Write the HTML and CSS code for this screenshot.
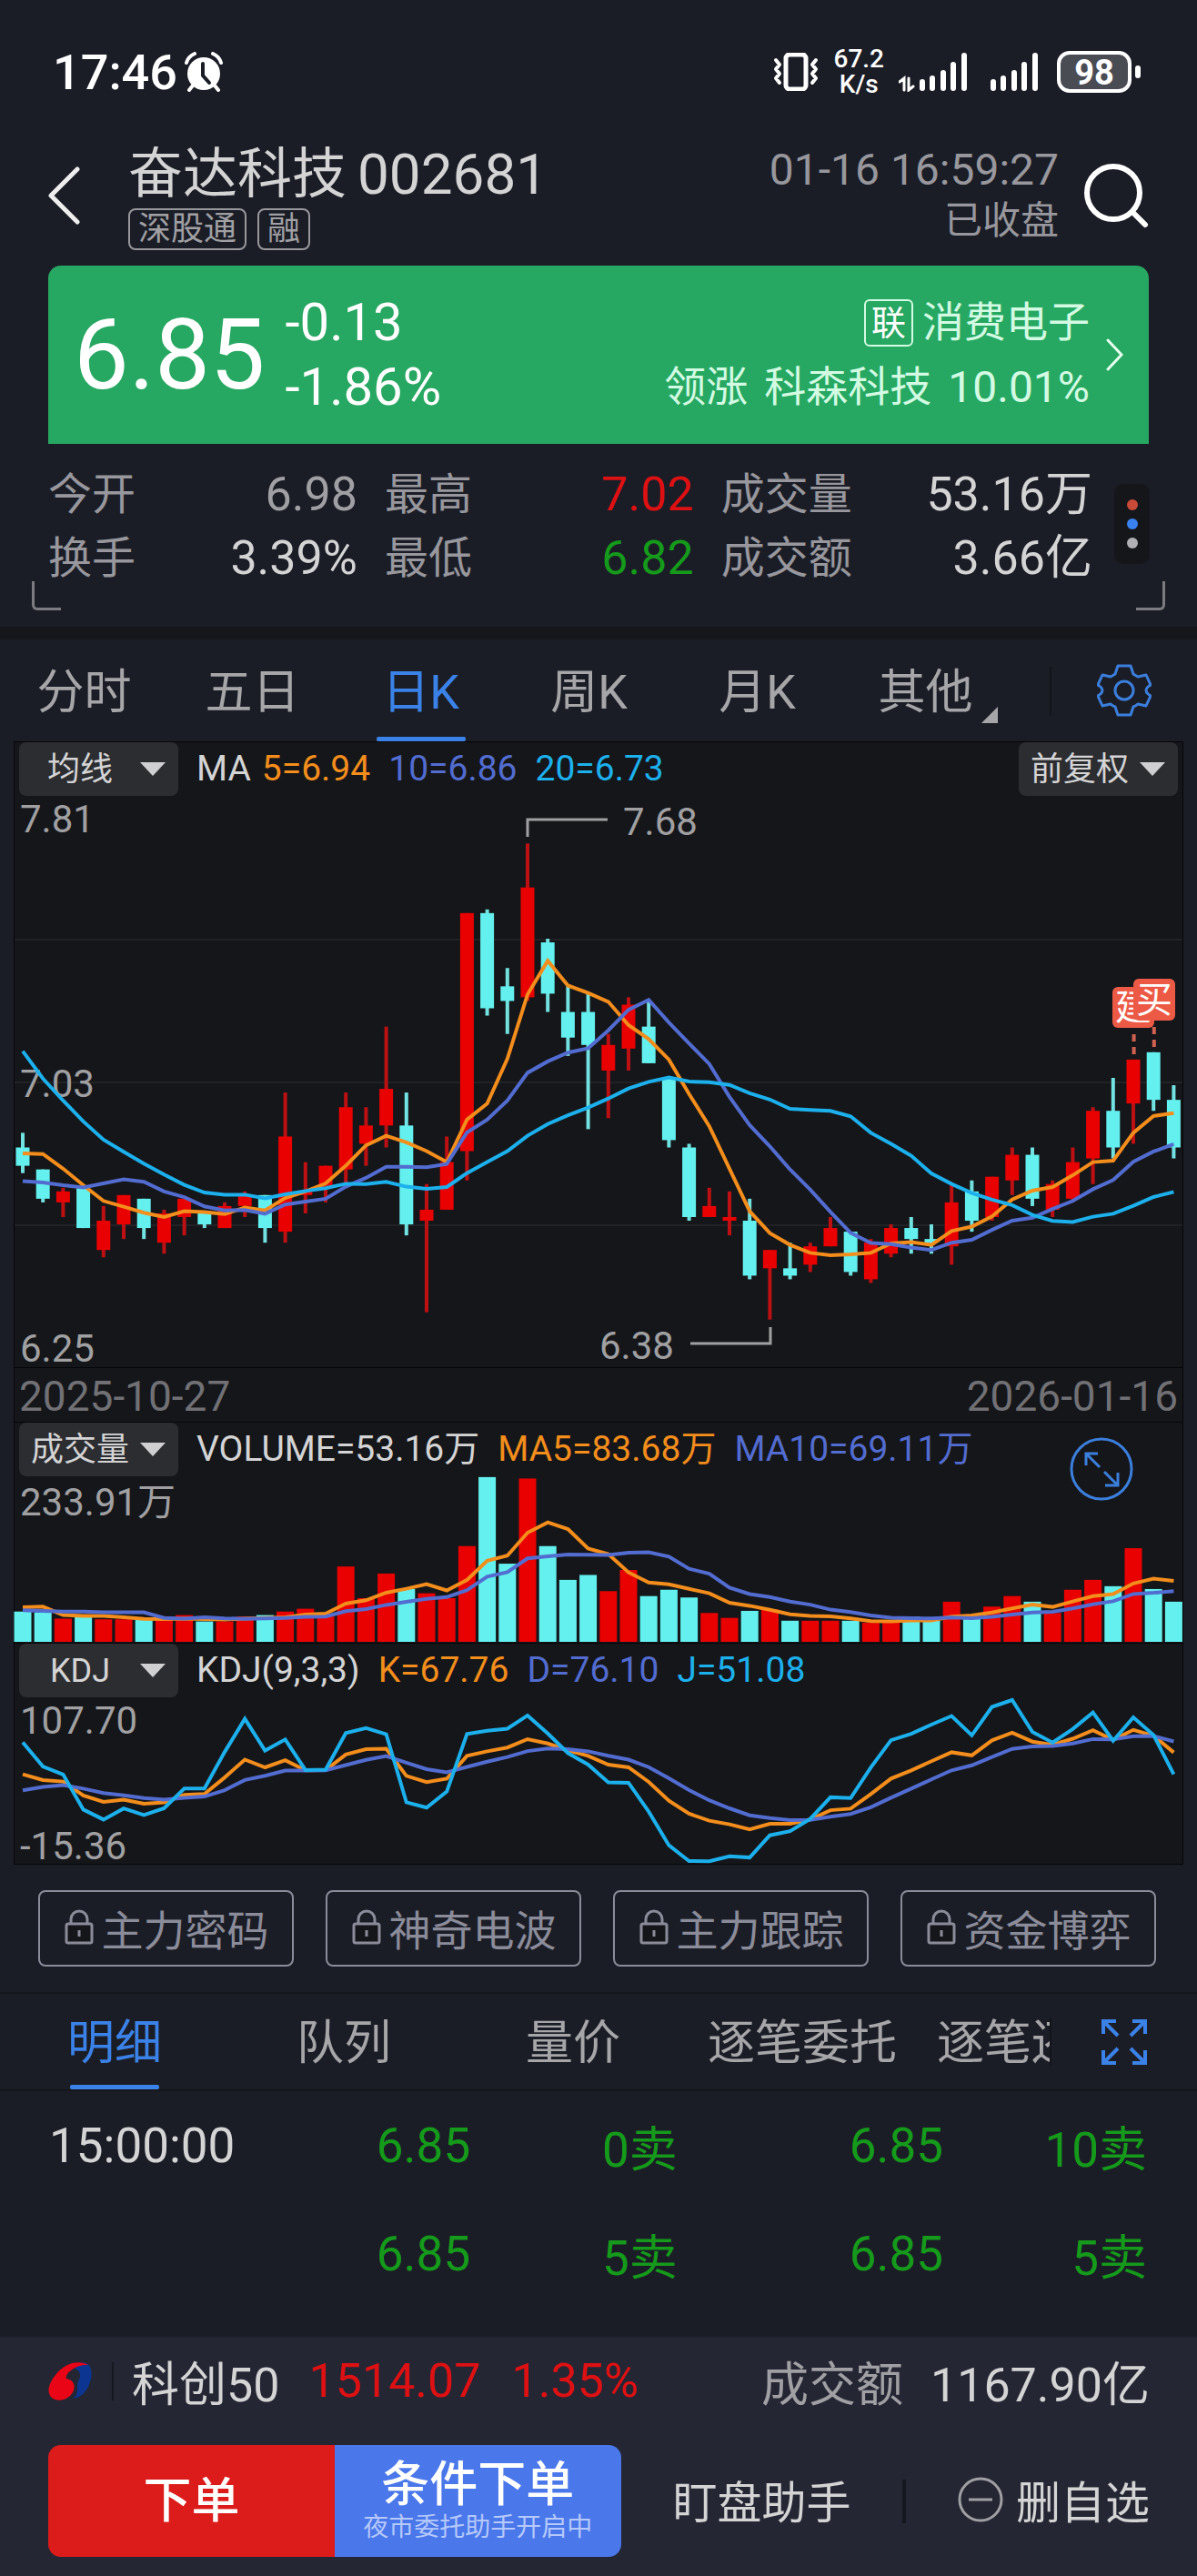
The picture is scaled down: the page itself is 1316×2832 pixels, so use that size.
FILE: index.html
```
<!DOCTYPE html>
<html lang="zh-CN">
<head>
    <meta charset="UTF-8">
    <meta name="viewport" content="width=device-width, initial-scale=1.0">
    <title>奋达科技 002681</title>
    <link rel="stylesheet" href="styles.css">
</head>
<body>
    <div class="status-bar">
        <span class="clock">17:46</span>
        <svg class="alarm" width="42" height="44" viewBox="0 0 42 44">
            <circle cx="21" cy="24" r="18" fill="#fff"/>
            <path d="M2 12Q4 5 11 2M40 12Q38 5 31 2M9 37l-4 5M33 37l4 5" stroke="#fff" stroke-width="4" fill="none" stroke-linecap="round"/>
            <path d="M20 13v13l7 8" stroke="#1b1d26" stroke-width="4" fill="none" stroke-linecap="round"/>
        </svg>
        <div class="status-right">
            <svg width="50" height="42" viewBox="0 0 50 42" fill="none" stroke="#fff" stroke-width="4" stroke-linecap="round" stroke-linejoin="round">
                <rect x="14" y="2" width="22" height="38" rx="4" stroke-width="5"/>
                <path d="M3 8l4 5-4 5 4 5-4 5 4 5M47 8l-4 5 4 5-4 5 4 5-4 5"/>
            </svg>
            <span class="speed">67.2<br>K/s</span>
            <svg width="76" height="44" viewBox="0 0 76 44" stroke="#fff" stroke-width="6" stroke-linecap="round">
                <path d="M26 33v7M37 29v11M49 23v17M60 14v26M72 4v36"/>
                <path d="M1 33l5-4v13M11 29v13l5-4M16 38v0" stroke-width="3" fill="none"/>
            </svg>
            <svg class="signal" width="54" height="44" viewBox="0 0 54 44" stroke="#fff" stroke-width="6" stroke-linecap="round">
                <path d="M4 33v7M15 29v11M27 23v17M38 14v26M50 4v36"/>
            </svg>
            <span class="battery">98</span>
        </div>
    </div>

    <header class="header">
        <button class="icon-btn back" aria-label="返回">
            <svg width="36" height="64" viewBox="0 0 36 64" fill="none" stroke="#eee" stroke-width="5" stroke-linecap="round" stroke-linejoin="round"><path d="M33 3L4 32l29 29"/></svg>
        </button>
        <div class="stock">
            <h1>奋达科技 <span>002681</span></h1>
            <div class="tags"><span>深股通</span><span>融</span></div>
        </div>
        <div class="trade-time">
            <div class="date">01-16 16:59:27</div>
            <div class="state">已收盘</div>
        </div>
        <button class="icon-btn" aria-label="搜索">
            <svg width="74" height="72" viewBox="0 0 74 72" fill="none" stroke="#fff" stroke-width="6" stroke-linecap="round"><circle cx="34" cy="33" r="29"/><path d="M55 54l14 14"/></svg>
        </button>
    </header>

    <section class="quote">
        <a class="quote-card" href="#">
            <strong class="price">6.85</strong>
            <span class="change">-0.13<br>-1.86%</span>
            <span class="sector">
                <span class="sector-name"><i>联</i>消费电子</span>
                <span class="leader"><span>领涨</span> <span>科森科技</span> <b>10.01%</b></span>
            </span>
            <svg width="19" height="36" viewBox="0 0 19 36" fill="none" stroke="#e6fff0" stroke-width="3" stroke-linecap="round"><path d="M2 2l15 16L2 34"/></svg>
        </a>
        <div class="stats">
            <dl>
                <div><dt>今开</dt><dd class="grey">6.98</dd></div>
                <div><dt>换手</dt><dd>3.39%</dd></div>
            </dl>
            <dl>
                <div><dt>最高</dt><dd class="red">7.02</dd></div>
                <div><dt>最低</dt><dd class="green">6.82</dd></div>
            </dl>
            <dl class="wide">
                <div><dt>成交量</dt><dd>53.16万</dd></div>
                <div><dt>成交额</dt><dd>3.66亿</dd></div>
            </dl>
            <button class="more" aria-label="更多"><i></i><i></i><i></i></button>
        </div>
        <div class="corners"><span></span><span></span></div>
    </section>

    <nav class="period">
        <div class="period-tabs">
            <button>分时</button>
            <button>五日</button>
            <button class="active">日K</button>
            <button>周K</button>
            <button>月K</button>
            <button class="other">其他<svg width="18" height="18" viewBox="0 0 18 18"><path d="M18 0v18H0z" fill="#a6a6a9"/></svg></button>
        </div>
        <button class="settings" aria-label="设置">
            <svg width="60" height="60" viewBox="0 0 60 60" fill="none" stroke="#3b7fdd" stroke-width="3" stroke-linejoin="round">
                <path d="M23 3h14l3 9q3 2 5 3l9-2 5 11q-5 3-5 6t5 6l-5 11-9-2q-2 2-5 3l-3 9H23l-3-9q-3-1-5-3l-9 2L1 36q5-3 5-6t-5-6L6 13l9 2q2-1 5-3z"/>
                <circle cx="30" cy="30" r="10"/>
            </svg>
        </button>
    </nav>

    <main class="panel">
        <div class="legend">
            <label class="picker"><select aria-label="主图指标"><option>均线</option></select></label>
            <span>MA</span>
            <span class="orange">5=6.94</span>
            <span class="violet">10=6.86</span>
            <span class="blue">20=6.73</span>
            <label class="picker right"><select aria-label="复权"><option>前复权</option></select></label>
        </div>
        <svg class="chart" id="priceChart" viewBox="0 0 1284 628"></svg>
        <div class="dates"><span>2025-10-27</span><span>2026-01-16</span></div>
        <div class="legend">
            <label class="picker"><select aria-label="副图指标一"><option>成交量</option></select></label>
            <span>VOLUME=53.16万</span>
            <span class="orange gap">MA5=83.68万</span>
            <span class="violet">MA10=69.11万</span>
            <button class="zoom" aria-label="全屏">
                <svg width="70" height="70" viewBox="0 0 70 70" fill="none" stroke="#3b7fdd" stroke-width="3">
                    <circle cx="35" cy="35" r="33"/>
                    <path d="M33 33L18 18M18 31V18h13M38 38l15 15M53 39v14H39"/>
                </svg>
            </button>
        </div>
        <svg class="chart" id="volumeChart" viewBox="0 0 1284 183"></svg>
        <div class="legend">
            <label class="picker"><select aria-label="副图指标二"><option>KDJ</option></select></label>
            <span>KDJ(9,3,3)</span>
            <span class="orange gap">K=67.76</span>
            <span class="violet">D=76.10</span>
            <span class="blue">J=51.08</span>
        </div>
        <svg class="chart" id="kdjChart" viewBox="0 0 1284 183"></svg>
    </main>

    <svg hidden>
        <symbol id="lock" viewBox="0 0 34 40">
            <path d="M8 16v-5a9 9 0 0 1 18 0v5" fill="none" stroke="#8b8c9a" stroke-width="3"/>
            <rect x="3" y="16" width="28" height="21" rx="2" fill="#15161a" stroke="#8b8c9a" stroke-width="3"/>
            <path d="M17 23v7" stroke="#8b8c9a" stroke-width="3"/>
        </symbol>
    </svg>
    <div class="features">
        <button><svg width="34" height="40"><use href="#lock"/></svg>主力密码</button>
        <button><svg width="34" height="40"><use href="#lock"/></svg>神奇电波</button>
        <button><svg width="34" height="40"><use href="#lock"/></svg>主力跟踪</button>
        <button><svg width="34" height="40"><use href="#lock"/></svg>资金博弈</button>
    </div>

    <nav class="detail">
        <div class="detail-tabs">
            <button class="active">明细</button>
            <button>队列</button>
            <button>量价</button>
            <button>逐笔委托</button>
            <button>逐笔还原</button>
        </div>
        <button class="settings" aria-label="展开">
            <svg width="50" height="50" viewBox="0 0 50 50" fill="none" stroke="#3b82e8" stroke-width="4">
                <path d="M2 16V2h14M2 2l16 16M34 2h14v14M48 2L32 18M2 34v14h14M2 48l16-16M34 48h14V34M48 48L32 32"/>
            </svg>
        </button>
    </nav>
    <table class="ticks">
        <tr><th scope="row">15:00:00</th><td>6.85</td><td>0卖</td><td>6.85</td><td>10卖</td></tr>
        <tr><th scope="row"></th><td>6.85</td><td>5卖</td><td>6.85</td><td>5卖</td></tr>
    </table>

    <footer class="footer">
        <div class="index-row">
            <svg width="50" height="46" viewBox="0 0 50 46">
                <path d="M42 3c6 3 7 12 4 21-3 10-10 17-19 18 6-5 5-9 5-14 0-6 4-8 3-13-1-4-5-6-8-8 5-4 10-6 15-4z" fill="#0b3590"/>
                <path d="M44 5C33-1 18 3 8 16 0 26-2 36 4 41c6 5 18 3 23-6 4-8 0-14-7-15-2-6 11-16 24-15z" fill="#ea0516"/>
            </svg>
            <span class="sep"></span>
            <span class="index-name">科创50</span>
            <span class="red">1514.07</span>
            <span class="red">1.35%</span>
            <span class="turnover"><span class="grey">成交额</span>1167.90亿</span>
        </div>
        <div class="actions">
            <div class="order">
                <button class="buy">下单</button>
                <button class="cond">条件下单<small>夜市委托助手开启中</small></button>
            </div>
            <button class="action watch">盯盘助手</button>
            <span class="sep"></span>
            <button class="action">
                <svg width="50" height="50" viewBox="0 0 50 50" fill="none" stroke="#a0a0a4" stroke-width="3"><circle cx="25" cy="25" r="23"/><path d="M12 25h26"/></svg>删自选
            </button>
        </div>
    </footer>

    <script>
        // up/down flag, open-close body top, body bottom, high, low
        const candles = [
            [0,6.85,6.80,6.89,6.78],[0,6.79,6.71,6.79,6.70],[1,6.73,6.70,6.74,6.66],[0,6.74,6.63,6.74,6.63],
            [1,6.65,6.57,6.69,6.55],[1,6.72,6.64,6.72,6.60],[0,6.71,6.63,6.71,6.60],[1,6.67,6.59,6.68,6.56],
            [1,6.71,6.66,6.71,6.61],[0,6.67,6.64,6.67,6.63],[1,6.69,6.63,6.70,6.63],[1,6.72,6.69,6.73,6.66],
            [0,6.72,6.63,6.72,6.59],[1,6.88,6.62,7.00,6.59],[1,6.73,6.72,6.81,6.67],[1,6.80,6.74,6.80,6.70],
            [1,6.96,6.79,7.00,6.74],[1,6.91,6.86,6.96,6.80],[1,7.01,6.91,7.18,6.85],[0,6.91,6.64,7.00,6.61],
            [1,6.68,6.65,6.75,6.40],[1,6.81,6.68,6.88,6.68],[1,7.49,6.84,7.49,6.76],[0,7.49,7.23,7.50,7.21],
            [0,7.29,7.25,7.34,7.16],[1,7.56,7.26,7.68,7.25],[0,7.41,7.27,7.42,7.22],[0,7.22,7.15,7.29,7.10],
            [0,7.22,7.13,7.27,6.90],[1,7.13,7.06,7.16,6.93],[1,7.24,7.12,7.26,7.06],[0,7.18,7.08,7.25,7.08],
            [0,7.04,6.87,7.04,6.85],[0,6.85,6.66,6.86,6.65],[1,6.69,6.66,6.74,6.66],[1,6.66,6.65,6.73,6.61],
            [0,6.65,6.50,6.71,6.49],[1,6.57,6.52,6.57,6.38],[0,6.52,6.50,6.59,6.49],[1,6.58,6.53,6.59,6.51],
            [1,6.63,6.58,6.66,6.58],[0,6.62,6.51,6.62,6.50],[1,6.59,6.49,6.60,6.48],[1,6.63,6.56,6.64,6.55],
            [0,6.63,6.60,6.66,6.56],[0,6.60,6.59,6.64,6.56],[1,6.70,6.58,6.75,6.53],[0,6.73,6.65,6.76,6.62],
            [1,6.77,6.66,6.77,6.65],[1,6.83,6.76,6.85,6.72],[0,6.83,6.71,6.85,6.69],[1,6.75,6.68,6.76,6.66],
            [1,6.81,6.71,6.85,6.70],[1,6.95,6.82,6.96,6.75],[0,6.95,6.85,7.04,6.82],[1,7.09,6.97,7.09,6.86],
            [0,7.11,6.98,7.11,6.95],[0,6.98,6.85,7.02,6.82]
        ];
        const volumes = [43,42,33,35,32,32,31,32,38,29,29,36,38,43,47,36,107,62,97,75,69,62,136,234,111,232,136,88,95,
            72,102,65,74,63,41,34,44,46,30,30,30,30,27,29,36,30,57,35,50,65,57,41,74,88,79,133,75,57];

        const RED = '#e90000', CYAN = '#63f0ee', ORANGE = '#f38d1c', VIOLET = '#526cd0', BLUE = '#1cb0ec', GREY = '#a0a0a2';
        const closes = candles.map(c => c[0] ? c[1] : c[2]);
        const cx = i => 9 + i * 22.2;

        function average(list, n, head) {
            return list.map((v, i) => {
                if (i < head.length) return head[i];
                return list.slice(i - n + 1, i + 1).reduce((a, b) => a + b, 0) / n;
            });
        }
        function line(list, y, color) {
            const points = list.map((v, i) => cx(i).toFixed(1) + ',' + y(v).toFixed(1)).join(' ');
            return `<polyline points="${points}" fill="none" stroke="${color}" stroke-width="4"/>`;
        }
        function rect(x, y, w, h, color) {
            return `<rect x="${x}" y="${y}" width="${w}" height="${Math.max(h, 2)}" fill="${color}"/>`;
        }
        function label(x, y, text) {
            return `<text x="${x}" y="${y}" class="axis">${text}</text>`;
        }

        // Price
        const py = v => (7.81 - v) * 402.6;
        let html = '';
        [157, 314, 471].forEach(y => html += rect(0, y, 1284, 2, '#212226'));
        html += label(6, 40, '7.81') + label(6, 331, '7.03') + label(6, 622, '6.25');
        candles.forEach(([up, top, bottom, high, low], i) => {
            const color = up ? RED : CYAN;
            html += rect(cx(i) - 2, py(high), 4, py(low) - py(high), up ? '#bd1013' : '#72e2e0');
            html += rect(cx(i) - 7.5, py(top), 15, py(bottom) - py(top), color);
        });
        html += line(average(closes, 5, [6.834,6.832,6.792,6.747]), py, ORANGE);
        html += line(average(closes, 10, [6.758,6.754,6.747,6.741,6.752,6.763,6.756,6.730,6.714]), py, VIOLET);
        html += line(average(closes, 20, [7.113,7.038,6.978,6.921,6.871,6.838,6.806,6.776,6.748,6.727,6.721,6.721,
            6.711,6.722,6.731,6.739,6.751,6.750,6.756]), py, BLUE);
        html += `<path d="M564 45V26h88M831 584v18h-88" fill="none" stroke="${GREY}" stroke-width="3"/>`;
        html += label(669, 43, '7.68') + label(643, 619, '6.38');
        html += '<path d="M1230.6 262v22M1252.8 254v22" stroke="#d0604f" stroke-width="4" stroke-dasharray="8 6"/>';
        html += '<rect x="1207" y="210" width="46" height="45" rx="6" fill="#ec5a46"/><text x="1230" y="246" class="mark">建</text>';
        html += '<rect x="1230" y="201" width="46" height="46" rx="6" fill="#ec5a46"/><text x="1253" y="238" class="mark">买</text>';
        document.getElementById('priceChart').innerHTML = html;

        // Volume
        const vy = v => 182 - v * 0.774;
        html = '';
        volumes.forEach((v, i) => html += rect(cx(i) - 9.5, vy(v), 19, 182 - vy(v), candles[i][0] ? RED : CYAN));
        html += line(average(volumes, 5, [49,50,38,37]), vy, ORANGE);
        html += line(average(volumes, 10, [45,44,43,43,42,42,42,34,33]), vy, VIOLET);
        html += label(6, 43, '233.91万');
        document.getElementById('volumeChart').innerHTML = html;

        // KDJ(9,3,3)
        const k = [51.0,46.6,45.5,34.8,30.0,31.7,28.6,29.6];
        const d = [38.8];
        for (let i = 8; i < candles.length; i++) {
            const days = candles.slice(i - 8, i + 1);
            const high = Math.max(...days.map(c => c[3]));
            const low = Math.min(...days.map(c => c[4]));
            k[i] = (k[i - 1] * 2 + (closes[i] - low) / (high - low) * 100) / 3;
        }
        for (let i = 1; i < k.length; i++) {
            d[i] = (d[i - 1] * 2 + k[i]) / 3;
        }
        const ky = v => 3 + (107.7 - v) * 1.441;
        html = label(6, 40, '107.70') + label(6, 178, '-15.36');
        html += line(k, ky, ORANGE) + line(d, ky, VIOLET) + line(k.map((v, i) => 3 * v - 2 * d[i]), ky, BLUE);
        document.getElementById('kdjChart').innerHTML = html;
    </script>
</body>
</html>
```
FILE: styles.css
```
* {
    box-sizing: border-box;
}

body {
    margin: 0;
    background-color: #1b1d26;
    color: #d4d4d5;
    font-family: Roboto, "Noto Sans CJK SC", sans-serif;
    font-size: 52px;
}

button, select {
    font-family: inherit;
    font-size: inherit;
    color: inherit;
    background: none;
    border: none;
    padding: 0;
    cursor: pointer;
}

svg {
    display: block;
    flex: none;
}

svg[hidden] {
    display: none;
}

i {
    font-style: normal;
}

.red {
    color: #dd1113;
}

.green {
    color: #159a1b;
}

.grey {
    color: #a0a0a4;
}

.orange {
    color: #f38d1c;
}

.violet {
    color: #526cd0;
}

.blue {
    color: #1cb0ec;
}

/* Status bar */
.status-bar {
    display: flex;
    align-items: center;
    height: 158px;
    padding: 0 72px 0 58px;
    color: #fff;
    font-weight: 500;
}

.clock {
    font-size: 54px;
}

.alarm {
    margin-left: 8px;
}

.status-right {
    display: flex;
    align-items: center;
    margin-left: auto;
}

.speed {
    margin: 0 16px;
    font-size: 28px;
    line-height: 28px;
    text-align: center;
}

.signal {
    margin: 0 20px 0 24px;
}

.battery {
    position: relative;
    width: 82px;
    height: 46px;
    border: 4px solid #fff;
    border-radius: 14px;
    background-color: #4a4c54;
    font-size: 38px;
    font-weight: 700;
    line-height: 40px;
    text-align: center;
}

.battery::after {
    content: "";
    position: absolute;
    right: -14px;
    top: 12px;
    width: 6px;
    height: 14px;
    border-radius: 3px;
    background-color: #fff;
}

/* Header */
.header {
    display: flex;
    align-items: center;
    height: 134px;
    padding: 0 52px 20px;
}

.icon-btn {
    display: flex;
    align-items: center;
}

.stock {
    margin-left: 53px;
}

.stock h1 {
    display: flex;
    gap: 12px;
    margin: 0;
    font-size: 60px;
    font-weight: 400;
    line-height: 74px;
}

.stock h1 span {
    font-size: 62px;
}

.tags {
    display: flex;
    gap: 12px;
}

.tags span {
    padding: 0 9px;
    border: 2px solid #98989c;
    border-radius: 8px;
    color: #a0a0a4;
    font-size: 36px;
    line-height: 42px;
}

.trade-time {
    margin: 0 26px 0 auto;
    color: #97979d;
    text-align: right;
    line-height: 56px;
}

.date {
    font-size: 48px;
}

.state {
    font-size: 42px;
}

/* Quote */
.quote {
    padding: 0 35px 18px;
    border-bottom: 14px solid #15161a;
}

.quote-card {
    display: flex;
    align-items: center;
    height: 196px;
    margin: 0 18px;
    padding: 0 28px;
    border-radius: 14px 14px 0 0;
    background-color: #27a862;
    color: #fff;
    text-decoration: none;
}

.price {
    font-size: 108px;
    font-weight: 400;
}

.change {
    margin-left: 22px;
    font-size: 58px;
    line-height: 71px;
}

.sector {
    display: flex;
    flex-direction: column;
    align-items: flex-end;
    margin: 0 18px 0 auto;
    color: #d3fbe3;
    font-size: 46px;
    line-height: 71px;
}

.sector-name {
    display: flex;
    align-items: center;
    gap: 10px;
}

.sector-name i {
    width: 54px;
    border: 2px solid #d3fbe3;
    border-radius: 6px;
    color: #fff;
    font-size: 38px;
    line-height: 48px;
    text-align: center;
}

.leader {
    display: flex;
    gap: 18px;
}

.leader b {
    font-size: 48px;
    font-weight: 400;
}

.stats {
    display: flex;
    gap: 30px;
    padding: 21px 17px 0 18px;
}

.stats dl {
    flex: 338;
    margin: 0;
}

.stats .wide {
    flex: 406;
}

.stats dl div {
    display: flex;
    justify-content: space-between;
    line-height: 70px;
}

.stats dt {
    color: #97979d;
    font-size: 48px;
}

.stats dd {
    margin: 0;
}

.more {
    display: flex;
    flex-direction: column;
    align-items: center;
    justify-content: center;
    gap: 9px;
    width: 39px;
    height: 88px;
    margin: 23px 0 0 -6px;
    border-radius: 10px;
    background-color: #15161a;
}

.more i {
    width: 12px;
    height: 12px;
    border-radius: 50%;
    background-color: #c84a38;
}

.more i:nth-child(2) {
    background-color: #3a82f0;
}

.more i:nth-child(3) {
    background-color: #b0b0b4;
}

.corners {
    display: flex;
    justify-content: space-between;
    margin-top: -10px;
}

.corners span {
    width: 32px;
    height: 32px;
    border: solid #7c7c80;
    border-width: 0 0 3px 3px;
    border-radius: 0 0 0 6px;
}

.corners span + span {
    border-width: 0 3px 3px 0;
    border-radius: 0 0 6px 0;
}

/* Tabs */
.period, .detail {
    display: flex;
    align-items: center;
}

.period {
    height: 112px;
}

.period-tabs, .detail-tabs {
    display: flex;
    flex: 1;
    height: 100%;
    color: #a6a6a9;
}

.period-tabs {
    padding-right: 44px;
}

.period-tabs button, .detail-tabs button {
    position: relative;
    flex: 1;
    padding-bottom: 6px;
    font-size: 52px;
}

.period-tabs .active, .detail-tabs .active {
    color: #3b82e8;
}

.active::after {
    content: "";
    position: absolute;
    left: 50%;
    bottom: 0;
    width: 98px;
    height: 5px;
    margin-left: -49px;
    border-radius: 2px;
    background-color: #3b82e8;
}

.other svg {
    position: absolute;
    right: 13px;
    bottom: 20px;
}

.settings {
    display: flex;
    align-items: center;
    justify-content: center;
    width: 162px;
    height: 53px;
    border-left: 2px solid #13141a;
}

/* Chart panel */
.panel {
    margin: 0 15px;
    border: 1px solid #060608;
    border-top: none;
    background-color: #15161a;
}

.legend {
    position: relative;
    display: flex;
    align-items: flex-start;
    gap: 20px;
    height: 60px;
    padding: 0 5px;
    border-top: 1px solid #060608;
    font-size: 39px;
    line-height: 59px;
}

.legend .orange:not(.gap) {
    margin-left: -8px;
}

.picker {
    position: relative;
    width: 175px;
}

.picker select {
    display: block;
    appearance: none;
    width: 100%;
    height: 59px;
    padding-right: 41px;
    border-radius: 8px;
    background-color: #2c2d31;
    font-size: 36px;
    text-align: center;
    text-align-last: center;
}

.picker::after {
    content: "";
    position: absolute;
    right: 14px;
    top: 22px;
    border: solid transparent;
    border-width: 15px 14px 0;
    border-top-color: #d0d0d2;
    pointer-events: none;
}

.picker.right {
    margin-left: auto;
}

.zoom {
    position: absolute;
    right: 54px;
    top: 16px;
}

.chart {
    width: 100%;
    overflow: visible;
}

.axis {
    fill: #a0a0a2;
    font-size: 42px;
}

.mark {
    fill: #fff;
    font-size: 40px;
    text-anchor: middle;
}

.dates {
    display: flex;
    justify-content: space-between;
    height: 60px;
    padding: 0 5px;
    border-top: 1px solid #060608;
    color: #717175;
    font-size: 46px;
    line-height: 62px;
}

/* Locked features */
.features {
    display: flex;
    gap: 35px;
    padding: 28px 45px 28px 42px;
    border-bottom: 2px solid #15161c;
}

.features button {
    display: flex;
    flex: 1;
    align-items: center;
    justify-content: center;
    gap: 8px;
    height: 84px;
    padding-bottom: 2px;
    border: 2px solid #8b8c9a;
    border-radius: 8px;
    color: #8b8c9a;
    font-size: 46px;
}

/* Detail */
.detail {
    height: 107px;
    border-bottom: 2px solid #15161c;
}

.detail-tabs {
    overflow: hidden;
}

.detail-tabs button {
    flex: 0 0 252px;
}

.ticks {
    width: 100%;
    border-collapse: collapse;
    table-layout: fixed;
    margin-bottom: 32px;
    color: #159a1b;
    font-size: 53px;
    text-align: right;
}

.ticks th {
    width: 22%;
    padding: 0 0 0 54px;
    color: #d4d4d5;
    font-weight: 400;
    text-align: left;
}

.ticks td {
    width: 17.3%;
    height: 119px;
    padding: 0;
}

.ticks td:nth-child(4) {
    width: 22.2%;
}

.ticks td:last-child {
    width: 21.2%;
    padding-right: 55px;
}

/* Footer */
.footer {
    padding: 0 52px 21px 53px;
    background-color: #242633;
}

.index-row {
    display: flex;
    align-items: center;
    height: 119px;
    padding-bottom: 22px;
}

.sep {
    width: 2px;
    height: 42px;
    margin: 0 20px;
    background-color: #16171f;
}

.index-name {
    margin-right: 32px;
}

.index-row .red {
    margin-right: 34px;
}

.turnover {
    display: flex;
    gap: 30px;
    margin-left: auto;
}

.actions {
    display: flex;
    align-items: center;
    justify-content: space-between;
}

.order {
    display: flex;
    width: 52%;
    height: 123px;
    border-radius: 14px;
    overflow: hidden;
    color: #fff;
}

.order button {
    flex: 1;
    font-size: 53px;
    font-weight: 500;
    line-height: 58px;
}

.buy {
    background-color: #dc1b1b;
}

.cond {
    background-color: #4a77ea;
}

.cond small {
    display: block;
    color: #b5c9fb;
    font-size: 28px;
    font-weight: 400;
    line-height: 36px;
}

.action {
    display: flex;
    align-items: center;
    gap: 14px;
    padding-bottom: 4px;
    font-size: 49px;
}

.actions .sep {
    width: 4px;
    height: 48px;
    margin: 0;
}
```
